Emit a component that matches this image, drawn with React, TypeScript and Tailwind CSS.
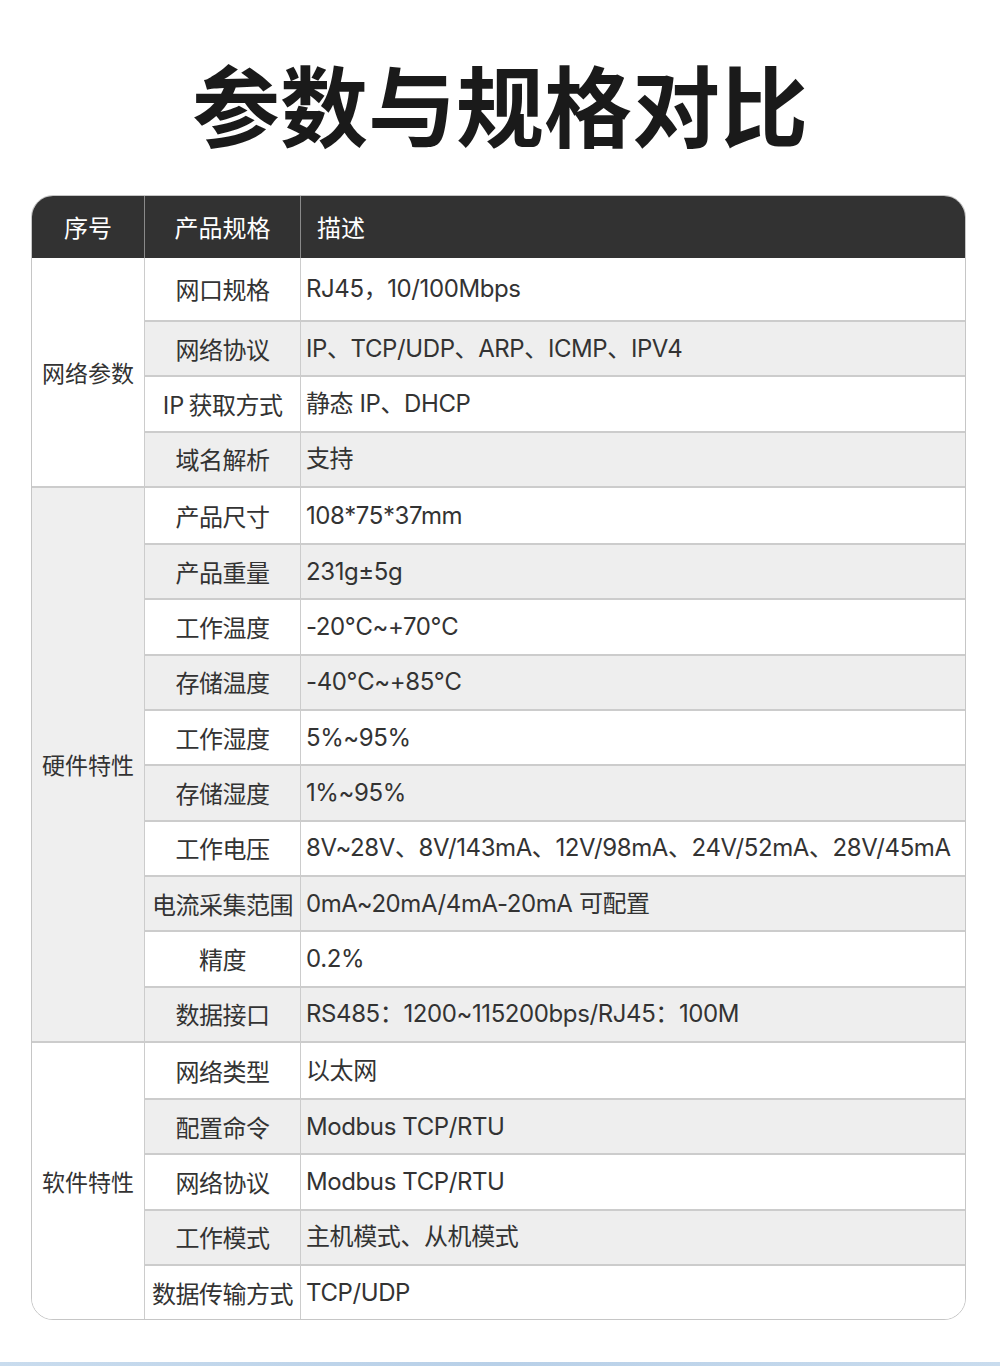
import React from 'react';

type Row = { name: string; desc: string };
type Group = { title: string; bg: string; rows: Row[] };

const groups: Group[] = [
  {
    title: '网络参数',
    bg: 'bg-white',
    rows: [
      { name: '网口规格', desc: 'RJ45，10/100Mbps' },
      { name: '网络协议', desc: 'IP、TCP/UDP、ARP、ICMP、IPV4' },
      { name: 'IP 获取方式', desc: '静态 IP、DHCP' },
      { name: '域名解析', desc: '支持' },
    ],
  },
  {
    title: '硬件特性',
    bg: 'bg-[#efefef]',
    rows: [
      { name: '产品尺寸', desc: '108*75*37mm' },
      { name: '产品重量', desc: '231g±5g' },
      { name: '工作温度', desc: '-20℃~+70℃' },
      { name: '存储温度', desc: '-40℃~+85℃' },
      { name: '工作湿度', desc: '5%~95%' },
      { name: '存储湿度', desc: '1%~95%' },
      { name: '工作电压', desc: '8V~28V、8V/143mA、12V/98mA、24V/52mA、28V/45mA' },
      { name: '电流采集范围', desc: '0mA~20mA/4mA-20mA 可配置' },
      { name: '精度', desc: '0.2%' },
      { name: '数据接口', desc: 'RS485：1200~115200bps/RJ45：100M' },
    ],
  },
  {
    title: '软件特性',
    bg: 'bg-white',
    rows: [
      { name: '网络类型', desc: '以太网' },
      { name: '配置命令', desc: 'Modbus TCP/RTU' },
      { name: '网络协议', desc: 'Modbus TCP/RTU' },
      { name: '工作模式', desc: '主机模式、从机模式' },
      { name: '数据传输方式', desc: 'TCP/UDP' },
    ],
  },
];

const font = { fontFamily: '"Noto Sans CJK SC", "Noto Sans", sans-serif' };
const descFont = { fontFamily: 'Inter, "Noto Sans CJK SC", sans-serif' };

export default function App() {
  let idx = 0;
  return (
    <div className="relative h-[1366px] w-[1000px] bg-white text-[#333]" style={font}>
      <h1 className="pt-[58px] text-center text-[88px] font-bold leading-none text-[#1a1a1a]">
        参数与规格对比
      </h1>

      <div className="ml-[31px] mt-[49px] w-[935px] overflow-hidden rounded-[22px] border border-[#c6c6c6]">
        <div className="flex h-[62px] items-center bg-[#323232] text-[24px] text-white">
          <div className="flex h-full w-[113px] items-center justify-center border-r border-[#8a8a8a]">序号</div>
          <div className="flex h-full w-[156px] items-center justify-center border-r border-[#8a8a8a]">产品规格</div>
          <div className="flex h-full flex-1 items-center pl-[16px]">描述</div>
        </div>

        {groups.map((g, gi) => (
          <div key={g.title} className={`flex ${gi > 0 ? 'border-t-2 border-[#cccccc]' : ''}`}>
            <div className={`flex w-[113px] items-center justify-center border-r border-[#cccccc] text-[23px] ${g.bg}`}>
              {g.title}
            </div>
            <div className="flex flex-1 flex-col">
              {g.rows.map((r, ri) => {
                const i = idx++;
                const gray = i % 2 === 1;
                return (
                  <div
                    key={r.name + i}
                    className={`flex text-[24px] ${i === 0 ? 'h-[62px]' : 'h-[55.3px]'} ${
                      ri > 0 ? 'border-t-2 border-[#cccccc]' : ''
                    } ${gray ? 'bg-[#eeeeee]' : 'bg-white'}`}
                  >
                    <div className="flex w-[156px] items-center justify-center whitespace-nowrap border-r border-[#cccccc] tracking-[-0.5px]">
                      {r.name}
                    </div>
                    <div className="flex flex-1 items-center whitespace-nowrap pl-[5px] tracking-[-0.4px]" style={descFont}>
                      {r.desc}
                    </div>
                  </div>
                );
              })}
            </div>
          </div>
        ))}
      </div>

      <div className="absolute bottom-0 left-0 h-[4px] w-full bg-gradient-to-r from-[#c9dcee] via-[#b8d0e8] to-[#c9dcee]" />
    </div>
  );
}
